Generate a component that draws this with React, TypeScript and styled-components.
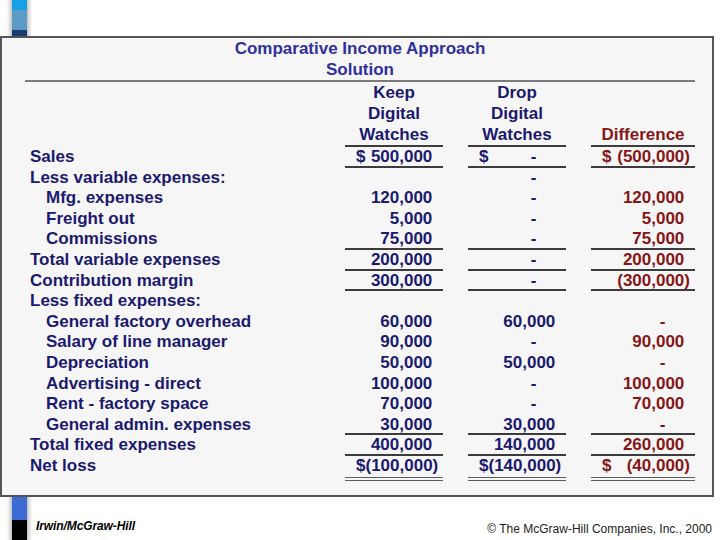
import React from 'react'
import styled, { createGlobalStyle } from 'styled-components'

type Rule = 'none' | 'single' | 'double'
type Tone = 'blue' | 'red'

interface Amt {
    v: string
    dollar?: boolean
    neg?: boolean
}

interface Line {
    label: string
    indent?: boolean
    cells: (Amt | null)[]
    rule?: Rule
}

const dash: Amt = { v: '-' }

const lines: Line[] = [
    { label: 'Sales', cells: [{ v: '500,000', dollar: true }, { v: '-', dollar: true }, { v: '500,000', dollar: true, neg: true }], rule: 'single' },
    { label: 'Less variable expenses:', cells: [null, dash, null] },
    { label: 'Mfg. expenses', indent: true, cells: [{ v: '120,000' }, dash, { v: '120,000' }] },
    { label: 'Freight out', indent: true, cells: [{ v: '5,000' }, dash, { v: '5,000' }] },
    { label: 'Commissions', indent: true, cells: [{ v: '75,000' }, dash, { v: '75,000' }], rule: 'single' },
    { label: 'Total variable expenses', cells: [{ v: '200,000' }, dash, { v: '200,000' }], rule: 'single' },
    { label: 'Contribution margin', cells: [{ v: '300,000' }, dash, { v: '300,000', neg: true }], rule: 'single' },
    { label: 'Less fixed expenses:', cells: [null, null, null] },
    { label: 'General factory overhead', indent: true, cells: [{ v: '60,000' }, { v: '60,000' }, dash] },
    { label: 'Salary of line manager', indent: true, cells: [{ v: '90,000' }, dash, { v: '90,000' }] },
    { label: 'Depreciation', indent: true, cells: [{ v: '50,000' }, { v: '50,000' }, dash] },
    { label: 'Advertising - direct', indent: true, cells: [{ v: '100,000' }, dash, { v: '100,000' }] },
    { label: 'Rent - factory space', indent: true, cells: [{ v: '70,000' }, dash, { v: '70,000' }] },
    { label: 'General admin. expenses', indent: true, cells: [{ v: '30,000' }, { v: '30,000' }, dash], rule: 'single' },
    { label: 'Total fixed expenses', cells: [{ v: '400,000' }, { v: '140,000' }, { v: '260,000' }], rule: 'single' },
    { label: 'Net loss', cells: [{ v: '100,000', dollar: true, neg: true }, { v: '140,000', dollar: true, neg: true }, { v: '40,000', dollar: true, neg: true }], rule: 'double' },
]

const heads = [
    { tone: 'blue' as Tone, text: ['Keep', 'Digital', 'Watches'] },
    { tone: 'blue' as Tone, text: ['Drop', 'Digital', 'Watches'] },
    { tone: 'red' as Tone, text: ['Difference'] },
]

const Figure = ({ amt }: { amt: Amt }) => {
    // excel accounting format: keep room for ")" and the two digits after a dash
    if (amt.v === '-') return <span>-<Pad>00)</Pad></span>
    if (amt.neg) return <span>({amt.v})</span>
    return <span>{amt.v}<Pad>)</Pad></span>
}

const App = () => {
    return (
        <Page>
            <GlobalStyle />
            <TopStrip>
                <BarTop />
            </TopStrip>
            <Panel>
                <Title>
                    Comparative Income Approach
                    <br />
                    Solution
                </Title>
                <TitleRule />
                <Sheet>
                    <span />
                    {heads.map((h, i) => (
                        <HeadCell key={i} tone={h.tone}>
                            {h.text.map(t => <span key={t}>{t}</span>)}
                        </HeadCell>
                    ))}
                    {lines.map(line => (
                        <React.Fragment key={line.label}>
                            <Label indent={line.indent}>{line.label}</Label>
                            {line.cells.map((c, i) => (
                                <Amount key={i} tone={i === 2 ? 'red' : 'blue'} rule={line.rule || 'none'}>
                                    <span>{c && c.dollar ? '$' : ''}</span>
                                    {c && <Figure amt={c} />}
                                </Amount>
                            ))}
                        </React.Fragment>
                    ))}
                </Sheet>
            </Panel>
            <Footer>
                <BarBottom />
                <Publisher>Irwin/McGraw-Hill</Publisher>
                <Copyright>© The McGraw-Hill Companies, Inc., 2000</Copyright>
            </Footer>
        </Page>
    )
}

export default App

const GlobalStyle = createGlobalStyle`
    body {
        margin: 0;
        background: #ffffff;
        font-family: "Liberation Sans", Arial, sans-serif;
    }
`

const Page = styled.div`
    width: 720px;
    height: 540px;
    overflow: hidden;
    display: flex;
    flex-direction: column;
`

const TopStrip = styled.div`
    height: 36px;
    padding-left: 12px;
    display: flex;
`

const BarTop = styled.div`
    width: 15px;
    height: 36px;
    background: linear-gradient(#18a0e6 0 10px, #5b9bc6 10px 30px, #1a3b6e 30px);
    box-shadow: 0 0 4px 2px rgba(0, 0, 0, 0.28);
`

const Panel = styled.section`
    position: relative;
    box-sizing: border-box;
    width: 714px;
    height: 461px;
    border: 2px solid #555555;
    background: #f6f6f6;
    padding: 1px 17px 0 23px;
`

const Title = styled.h1`
    margin: 0;
    text-align: center;
    font-size: 17px;
    line-height: 20.5px;
    font-weight: bold;
    color: #30309c;
`

const TitleRule = styled.div`
    height: 2px;
    background: #7c7c7c;
`

const Sheet = styled.div`
    display: grid;
    grid-template-columns: 295px 98px 98px 104px;
    grid-template-rows: auto repeat(15, 20.6px) auto;
    column-gap: 25px;
    font-size: 17px;
    font-weight: bold;
    line-height: 20.6px;
    color: #1a1a6e;
`

const HeadCell = styled.div<{ tone: Tone }>`
    display: flex;
    flex-direction: column;
    justify-content: flex-end;
    text-align: center;
    line-height: 21px;
    border-bottom: 2px solid #3c3c3c;
    color: ${p => (p.tone === 'red' ? '#861616' : '#1a1a6e')};
`

const Label = styled.div<{ indent?: boolean }>`
    padding-left: ${p => (p.indent ? '21px' : '5px')};
    white-space: nowrap;
`

const Amount = styled.div<{ tone: Tone; rule: Rule }>`
    display: flex;
    justify-content: space-between;
    padding: 0 5px 0 11px;
    white-space: nowrap;
    color: ${p => (p.tone === 'red' ? '#861616' : '#1a1a6e')};
    border-bottom: ${p =>
        p.rule === 'single' ? '2px solid #3c3c3c' : p.rule === 'double' ? '4px double #5c5c5c' : 'none'};
`

const Pad = styled.span`
    visibility: hidden;
`

const Footer = styled.footer`
    height: 43px;
    padding-left: 12px;
    display: flex;
    align-items: flex-start;
`

const BarBottom = styled.div`
    width: 15px;
    height: 43px;
    background: linear-gradient(#3a6cd4 0 23px, #000000 23px);
    box-shadow: 0 0 4px 2px rgba(0, 0, 0, 0.28);
`

const Publisher = styled.span`
    margin: 22px 0 0 9px;
    font-size: 12px;
    line-height: 14px;
    font-weight: bold;
    font-style: italic;
    letter-spacing: -0.1px;
    color: #000000;
`

const Copyright = styled.span`
    margin: 25px 8px 0 auto;
    font-size: 12px;
    line-height: 14px;
    color: #222222;
`
